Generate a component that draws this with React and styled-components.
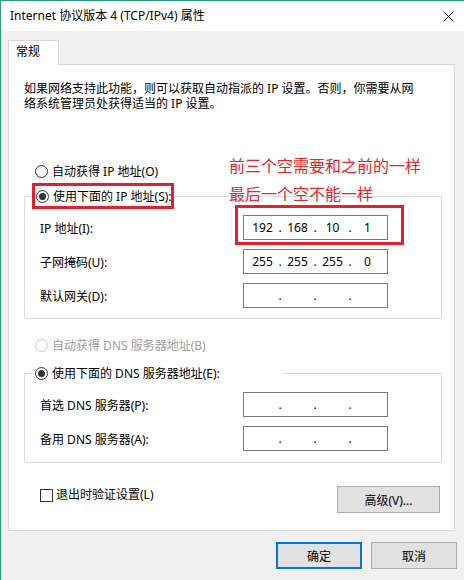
import React from "react";
import styled, { createGlobalStyle } from "styled-components";

const Global = createGlobalStyle`
  html, body { margin: 0; padding: 0; background: #f0f0f0; }
  body {
    font-family: "Noto Sans", "Noto Sans CJK SC", sans-serif;
    font-size: 12px;
    color: #000;
  }
  * { box-sizing: border-box; }
`;

const Window = styled.div`
  width: 464px;
  height: 580px;
  background: #f0f0f0;
  border-left: 1px solid #2e9b7c;
  border-top: 1px solid #2e9b7c;
  display: flex;
  flex-direction: column;
  overflow: hidden;
`;

const TitleBar = styled.div`
  height: 30px;
  flex: none;
  background: #fff;
  display: flex;
  align-items: center;
  justify-content: space-between;
  padding: 0 10px 0 9px;
`;

const Title = styled.span`
  font-size: 12px;
  line-height: 16px;
`;

const Body = styled.div`
  padding: 9px 9px 0 7px;
  display: flex;
  flex-direction: column;
`;

const TabStrip = styled.div`
  display: flex;
`;

const Tab = styled.div`
  position: relative;
  z-index: 1;
  width: 51px;
  height: 25px;
  margin-bottom: -1px;
  padding: 3px 0 0 7px;
  background: #fff;
  border: 1px solid #d9d9d9;
  border-bottom: none;
  line-height: 16px;
`;

const Panel = styled.div`
  position: relative;
  background: #fff;
  border: 1px solid #d9d9d9;
  padding: 16px 12px 17px 15px;
  display: flex;
  flex-direction: column;
`;

const Desc = styled.p`
  margin: 0;
  line-height: 15px;
  width: 400px;
`;

const Annotation = styled.div`
  position: absolute;
  left: 220px;
  top: 86px;
  color: #e3262d;
  font-family: "Noto Sans CJK SC", sans-serif;
  font-size: 16px;
  line-height: 28px;
  white-space: nowrap;
`;

const RadioRow = styled.div`
  display: flex;
  align-items: center;
  height: 16px;
  margin-top: ${(p) => p.$mt || 0}px;
  padding-left: 11px;
  color: ${(p) => (p.$disabled ? "#a0a0a0" : "#000")};
`;

const RadioCircle = styled.span`
  width: 13px;
  height: 13px;
  flex: none;
  border-radius: 50%;
  border: 1px solid ${(p) => (p.$disabled ? "#c8c8c8" : "#333")};
  background: #fff;
  display: flex;
  align-items: center;
  justify-content: center;
  margin-right: 4px;
  &::after {
    content: "";
    display: ${(p) => (p.$checked ? "block" : "none")};
    width: 7px;
    height: 7px;
    border-radius: 50%;
    background: #333;
  }
`;

const RadioText = styled.span`
  white-space: nowrap;
`;

const Radio = ({ checked, disabled, children }) => (
  <>
    <RadioCircle $checked={checked} $disabled={disabled} />
    <RadioText>{children}</RadioText>
  </>
);

const Group = styled.fieldset`
  margin: ${(p) => p.$mt}px 0 0 0;
  width: 418px;
  min-width: 0;
  border: 1px solid #dcdcdc;
  padding: 0 0 ${(p) => p.$pb}px 7px;
`;

const Legend = styled.legend`
  padding: 0;
  margin-left: ${(p) => p.$ml || 0}px;
  width: ${(p) => p.$w}px;
  height: ${(p) => (p.$boxed ? 26 : 16)}px;
  display: flex;
  align-items: center;
  white-space: nowrap;
  padding-left: ${(p) => (p.$boxed ? 1 : 2)}px;
  border: ${(p) => (p.$boxed ? "3px solid #e3202c" : "none")};
`;

const Rows = styled.div`
  display: flex;
  flex-direction: column;
  gap: 9px;
  padding: ${(p) => p.$pt}px 0 0 8px;
`;

const FieldRow = styled.div`
  display: grid;
  grid-template-columns: 203px 145px;
  align-items: center;
`;

const IpBox = styled.div`
  position: relative;
  width: 145px;
  height: 25px;
  border: 1px solid #7a7a7a;
  background: #fff;
  display: grid;
  grid-template-columns: 31px 4px 31px 4px 31px 4px 31px;
  align-items: center;
  padding-left: 3px;
  line-height: 16px;
`;

const Seg = styled.span`
  text-align: center;
`;

const Dot = styled.span`
  text-align: center;
`;

const Highlight = styled.div`
  position: absolute;
  top: -11px;
  left: -9px;
  right: -17px;
  bottom: -6px;
  border: 3px solid #e3202c;
  pointer-events: none;
`;

const IpField = ({ value = ["", "", "", ""], highlight }) => (
  <IpBox>
    <Seg>{value[0]}</Seg>
    <Dot>.</Dot>
    <Seg>{value[1]}</Seg>
    <Dot>.</Dot>
    <Seg>{value[2]}</Seg>
    <Dot>.</Dot>
    <Seg>{value[3]}</Seg>
    {highlight && <Highlight />}
  </IpBox>
);

const BottomRow = styled.div`
  margin-top: 23px;
  width: 418px;
  display: flex;
  justify-content: space-between;
  align-items: flex-start;
  padding: 0 2px 0 16px;
`;

const CheckLabel = styled.label`
  display: flex;
  align-items: center;
  margin-top: 1px;
  line-height: 16px;
`;

const CheckBox = styled.span`
  width: 13px;
  height: 13px;
  border: 1px solid #333;
  background: #fff;
  margin-right: 3px;
`;

const Button = styled.button`
  width: ${(p) => p.$w}px;
  height: 27px;
  background: #e1e1e1;
  border: ${(p) => (p.$primary ? "2px solid #0078d7" : "1px solid #adadad")};
  font-family: "Noto Sans", "Noto Sans CJK SC", sans-serif;
  font-size: 12px;
  color: #000;
  padding: 0;
  cursor: default;
`;

const Footer = styled.div`
  margin-top: 11px;
  display: flex;
  justify-content: flex-end;
  gap: 9px;
  padding-right: 7px;
`;

const CloseIcon = () => (
  <svg width="11" height="11" viewBox="0 0 11 11">
    <path d="M0.5 0.5 L10.5 10.5 M10.5 0.5 L0.5 10.5" stroke="#111" strokeWidth="1" />
  </svg>
);

export default function App() {
  return (
    <>
      <Global />
      <Window>
        <TitleBar>
          <Title>Internet 协议版本 4 (TCP/IPv4) 属性</Title>
          <CloseIcon />
        </TitleBar>
        <Body>
          <TabStrip>
            <Tab>常规</Tab>
          </TabStrip>
          <Panel>
            <Desc>
              如果网络支持此功能，则可以获取自动指派的 IP 设置。否则，你需要从网络系统管理员处获得适当的 IP 设置。
            </Desc>
            <Annotation>
              前三个空需要和之前的一样
              <br />
              最后一个空不能一样
            </Annotation>
            <RadioRow $mt={52}>
              <Radio>自动获得 IP 地址(O)</Radio>
            </RadioRow>
            <Group $mt={4} $pb={10}>
              <Legend $boxed $w={142}>
                <Radio checked>使用下面的 IP 地址(S):</Radio>
              </Legend>
              <Rows $pt={6}>
                <FieldRow>
                  <span>IP 地址(I):</span>
                  <IpField value={["192", "168", "10", "1"]} highlight />
                </FieldRow>
                <FieldRow>
                  <span>子网掩码(U):</span>
                  <IpField value={["255", "255", "255", "0"]} />
                </FieldRow>
                <FieldRow>
                  <span>默认网关(D):</span>
                  <IpField />
                </FieldRow>
              </Rows>
            </Group>
            <RadioRow $mt={18} $disabled>
              <Radio disabled>自动获得 DNS 服务器地址(B)</Radio>
            </RadioRow>
            <Group $mt={12} $pb={11}>
              <Legend $ml={1} $w={250}>
                <Radio checked>使用下面的 DNS 服务器地址(E):</Radio>
              </Legend>
              <Rows $pt={11}>
                <FieldRow>
                  <span>首选 DNS 服务器(P):</span>
                  <IpField />
                </FieldRow>
                <FieldRow>
                  <span>备用 DNS 服务器(A):</span>
                  <IpField />
                </FieldRow>
              </Rows>
            </Group>
            <BottomRow>
              <CheckLabel>
                <CheckBox />
                退出时验证设置(L)
              </CheckLabel>
              <Button $w={103}>高级(V)...</Button>
            </BottomRow>
          </Panel>
        </Body>
        <Footer>
          <Button $w={86} $primary>确定</Button>
          <Button $w={86}>取消</Button>
        </Footer>
      </Window>
    </>
  );
}
